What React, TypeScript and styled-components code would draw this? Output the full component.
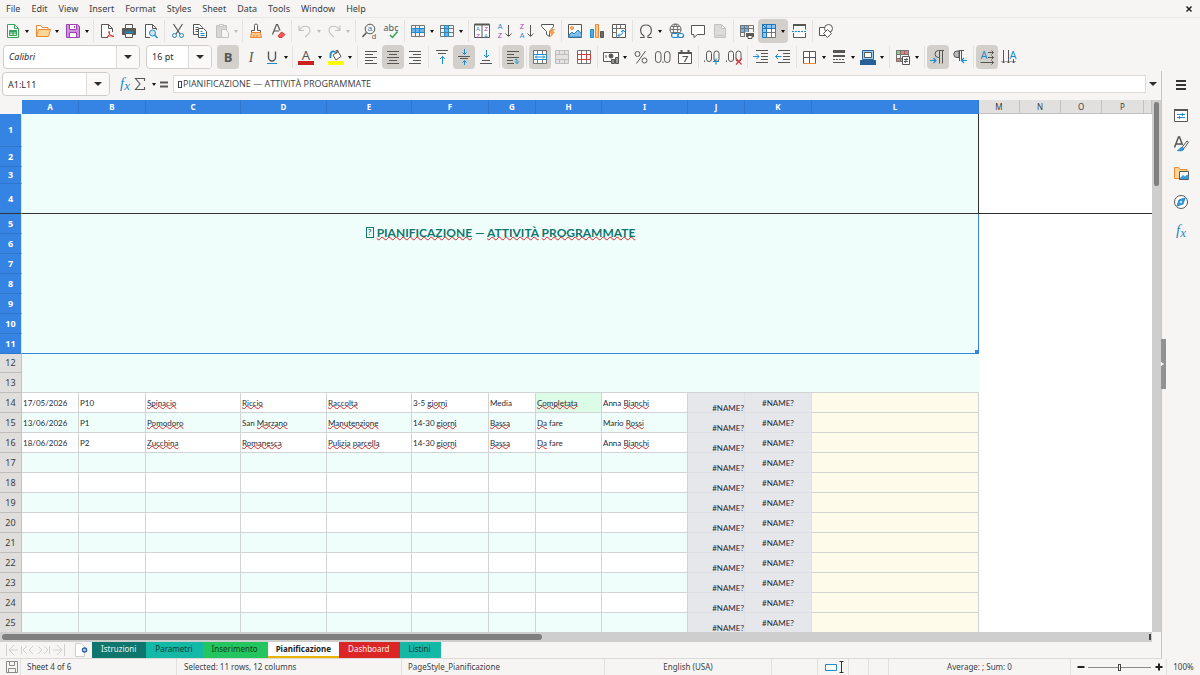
import React, { Fragment, ReactNode } from 'react';
import styled, { createGlobalStyle, css } from 'styled-components';

const ui = '"Noto Sans", "Open Sans", sans-serif';
const cellFont = 'Lato, "Open Sans", sans-serif';

const color = {
  chrome: '#f6f5f4',
  line: '#dcdad8',
  pressed: '#d3d0cc',
  text: '#3c4043',
  ink: '#565655',
  gridInk: '#747473',
  blue: '#1e8bcd',
  sky: '#83beec',
  orange: '#ed8733',
  red: '#d63a3a',
  purple: '#a142b4',
  green: '#35a35a',
  accent: '#3584e4',
  mint: '#effefb',
  grid: '#d0d4d4',
};

const GlobalStyle = createGlobalStyle`
  *, *::before, *::after { box-sizing: border-box; }
  body { margin: 0; background: ${color.chrome}; }
  button, input, select { font: inherit; color: inherit; margin: 0; padding: 0; }
`;

/* ---------- frame ---------- */

const Window = styled.div`
  display: flex;
  flex-direction: column;
  height: 100vh;
  overflow: hidden;
  background: ${color.chrome};
  color: ${color.text};
  font: 8px/12px ${ui};
`;

const MenuBar = styled.nav`
  display: flex;
  align-items: center;
  height: 18px;
  padding: 0 3px 0 2px;
  border-bottom: 1px solid #ebe9e7;
  font-size: 9px;
`;

const MenuItem = styled.button`
  border: 0;
  background: none;
  padding: 0 7px 0 4px;
`;

const CloseButton = styled.button`
  margin-left: auto;
  border: 0;
  background: none;
  display: flex;
`;

const Toolbar = styled.div<{ $height: number }>`
  display: flex;
  align-items: flex-start;
  height: ${(p) => p.$height}px;
  padding: 1px 0 0 2px;
  flex: none;
`;

const ToolButton = styled.button<{ $on?: boolean; $split?: number; $dim?: boolean }>`
  display: flex;
  align-items: center;
  width: ${(p) => 22 + (p.$split ?? 0)}px;
  height: 24px;
  flex: none;
  padding: 0 0 0 3px;
  border: 0;
  border-radius: 4px;
  background: ${(p) => (p.$on ? color.pressed : 'none')};
  color: ${(p) => (p.$dim ? '#c4c2c0' : color.ink)};
`;

const Caret = styled.span<{ $dim?: boolean }>`
  width: 0;
  margin-left: 4px;
  border: solid transparent;
  border-width: 3px 2px 0;
  border-top-color: ${(p) => (p.$dim ? '#bdbbb9' : '#111')};
`;

const Separator = styled.span`
  width: 1px;
  height: 22px;
  margin: 1px 2px;
  background: #e4e2e0;
  flex: none;
`;

const Svg = styled.svg`
  display: block;
  width: 16px;
  height: 16px;
  flex: none;
  fill: none;
  stroke: currentColor;
  overflow: visible;
`;

const Glyph = styled.text<{ $size: number; $face?: string }>`
  font: ${(p) => p.$size}px ${(p) => p.$face ?? ui};
  text-anchor: middle;
  stroke: none;
  fill: currentColor;
`;

const Combo = styled.label<{ $width: number; $italic?: boolean }>`
  display: flex;
  align-items: center;
  width: ${(p) => p.$width}px;
  height: 24px;
  flex: none;
  border: 1px solid #cfccc9;
  border-radius: 4px;
  background: #fff;
  overflow: hidden;
  font-size: 9px;
  color: #2c2c2c;
  font-style: ${(p) => (p.$italic ? 'italic' : 'normal')};

  select, input {
    flex: 1;
    min-width: 0;
    height: 100%;
    padding-left: 5px;
    border: 0;
    outline: 0;
    background: none;
    appearance: none;
  }
`;

const ComboArrow = styled.span`
  display: flex;
  align-items: center;
  justify-content: center;
  width: 23px;
  height: 100%;
  border-left: 1px solid ${color.line};
  background: #faf9f8;
`;

const Triangle = styled.span`
  border: solid transparent;
  border-width: 4px 4px 0;
  border-top-color: #2c2c2c;
`;

const FontCombos = styled.div`
  display: flex;
  gap: 6px;
  padding: 0 5px 0 1px;
`;

const Workspace = styled.div`
  display: flex;
  flex: 1;
  min-height: 0;
`;

const Main = styled.main`
  display: flex;
  flex-direction: column;
  flex: 1;
  min-width: 0;
`;

/* ---------- formula bar ---------- */

const FormulaBar = styled.div`
  display: flex;
  align-items: center;
  height: 29px;
  flex: none;
  padding: 0 4px 3px 2px;
`;

const FormulaTools = styled.div`
  display: flex;
  align-items: center;
  padding: 0 1px 0 7px;
`;

const PlainButton = styled.button<{ $width: number }>`
  display: flex;
  align-items: center;
  justify-content: center;
  width: ${(p) => p.$width}px;
  border: 0;
  background: none;
  color: ${color.ink};
`;

const FormulaField = styled.label`
  display: flex;
  align-items: center;
  flex: 1;
  height: 18px;
  margin-right: 2px;
  padding-left: 4px;
  border: 1px solid ${color.line};
  background: #fff;
  font: 9px/12px "Open Sans", sans-serif;

  input {
    flex: 1;
    min-width: 0;
    padding-left: 1px;
    border: 0;
    outline: 0;
    background: none;
  }
`;

const MissingGlyph = styled.span<{ $large?: boolean }>`
  display: inline-block;
  border: 1px solid currentColor;
  width: 4px;
  height: 7px;
  ${(p) =>
    p.$large &&
    css`
      width: 8px;
      height: 11px;
      margin: 2px 3px 0 0;
      font: bold 8px/9px ${cellFont};
      text-align: center;
      vertical-align: top;
    `}
`;

/* ---------- sheet ---------- */

const SheetArea = styled.div`
  display: flex;
  flex: 1;
  min-height: 0;
`;

const GridView = styled.div`
  flex: 1;
  min-width: 0;
  overflow: hidden;
  background: #fff;
`;

const Table = styled.table`
  width: 100%;
  table-layout: fixed;
  border-collapse: separate;
  border-spacing: 0;
  font: 8px/10px ${cellFont};
  color: #1f2937;

  td, th { padding: 0; overflow: hidden; white-space: nowrap; }
`;

const Col = styled.col<{ $width?: number }>`
  width: ${(p) => (p.$width ? `${p.$width}px` : 'auto')};
`;

const HeadCell = styled.th<{ $selected?: boolean }>`
  height: 14px;
  font: 8px/12px ${ui};
  font-weight: ${(p) => (p.$selected ? 700 : 400)};
  color: ${(p) => (p.$selected ? '#fff' : '#3c3c3c')};
  background: ${(p) => (p.$selected ? color.accent : '#e1e0df')};
  border-right: 1px solid ${(p) => (p.$selected ? '#2f76cc' : '#c4c2c0')};
  border-bottom: 1px solid ${(p) => (p.$selected ? color.accent : '#c4c2c0')};
`;

const Corner = styled.td`
  background: ${color.chrome};
`;

const RowHead = styled.th<{ $selected?: boolean; $height: number; $frozenEdge?: boolean }>`
  height: ${(p) => p.$height}px;
  font: 9px/12px ${ui};
  font-weight: ${(p) => (p.$selected ? 700 : 400)};
  color: ${(p) => (p.$selected ? '#fff' : '#3c3c3c')};
  background: ${(p) => (p.$selected ? color.accent : '#dfdedd')};
  border-right: 1px solid ${(p) => (p.$selected ? '#d5e4f8' : '#c4c2c0')};
  border-bottom: 1px solid
    ${(p) => (p.$frozenEdge ? '#333' : p.$selected ? '#2f76cc' : '#bfbdbb')};
`;

const TitleCell = styled.td`
  position: relative;
  background: ${color.mint};
  color: #0f766e;
  text-align: center;
  font: bold 12px/16px ${cellFont};

  && { padding-bottom: 2px; }
`;

const FrozenEdge = styled.span`
  position: absolute;
  inset: 0 0 auto 0;
  height: 100px;
  border: solid #333;
  border-width: 0 1px 1px 0;
`;

const SelectionEdge = styled.span`
  position: absolute;
  inset: 100px 0 0 0;
  border: solid ${color.accent};
  border-width: 0 1px 1px 0;

  &::after {
    content: '';
    position: absolute;
    right: -1px;
    bottom: -1px;
    width: 4px;
    height: 4px;
    background: ${color.accent};
  }
`;

const FreeCell = styled.td<{ $frozenEdge?: boolean }>`
  border-bottom: ${(p) => (p.$frozenEdge ? '1px solid #333' : '0')};
`;

const BlankCell = styled.td<{ $last?: boolean }>`
  background: ${color.mint};
  border-bottom: ${(p) => (p.$last ? `1px solid ${color.grid}` : '0')};
`;

type CellKind = 'plain' | 'error' | 'errorCentered' | 'note';

const DataCell = styled.td<{ $kind: CellKind; $striped: boolean; $done?: boolean }>`
  border: solid ${color.grid};
  border-width: 0 1px 1px 0;
  background: ${(p) => (p.$done ? '#dcfce7' : p.$striped ? color.mint : '#fff')};

  && { padding: 0 1px; }

  ${(p) =>
    p.$kind === 'note' &&
    css`
      background: #fffbeb;
    `}
  ${(p) =>
    p.$kind.startsWith('error') &&
    css`
      background: #e5e7eb;
      border-color: #dddfe4;
      text-align: center;
    `}
  ${(p) =>
    p.$kind === 'error' &&
    css`
      text-align: right;
      vertical-align: bottom;
      line-height: 8px;

      && { padding: 0; }
    `}
`;

const Misspelled = styled.span`
  text-decoration: underline wavy #e02424 1px;
  text-decoration-skip-ink: none;
  text-underline-offset: -1px;
`;

const VerticalTrack = styled.div`
  width: 9px;
  padding: 2px;
  background: #cecece;
`;

const VerticalThumb = styled.div`
  height: 16%;
  border-radius: 3px;
  background: #7f7f7f;
`;

const HorizontalTrack = styled.div`
  display: flex;
  justify-content: space-between;
  height: 10px;
  flex: none;
  margin-right: 9px;
  padding: 2px 1px 2px 2px;
  background: #cecece;
`;

const HorizontalThumb = styled.div`
  width: 47%;
  border-radius: 3px;
  background: #7f7f7f;
`;

const SplitHandle = styled.div`
  width: 2px;
  background: #444;
`;

const Tabs = styled.div`
  display: flex;
  height: 17px;
  flex: none;
  border-bottom: 1px solid ${color.line};
`;

const TabNav = styled.div`
  display: flex;
  align-items: center;
  width: 74px;
  padding-left: 5px;
`;

const NavButton = styled.button`
  display: flex;
  width: 15px;
  border: 0;
  background: none;
  color: #d2d0ce;
`;

const AddSheet = styled.button`
  display: flex;
  align-items: center;
  width: 18px;
  border: 0;
  background: none;
`;

const Tab = styled.button<{ $bg: string; $fg: string; $active?: boolean }>`
  border: 0;
  padding: ${(p) => (p.$active ? '0 8px 2px' : '0 10px 2px 9px')};
  background: ${(p) => p.$bg};
  color: ${(p) => p.$fg};
  font-weight: ${(p) => (p.$active ? 700 : 400)};
  box-shadow: ${(p) => (p.$active ? 'inset 0 -2px #eab308' : 'none')};
`;

/* ---------- sidebar ---------- */

const Sidebar = styled.aside`
  position: relative;
  display: flex;
  flex-direction: column;
  align-items: center;
  gap: 5px;
  width: 39px;
  padding: 3px 1px 0 1px;
  border-left: 1px solid #c8c6c4;
`;

const SideButton = styled.button`
  display: flex;
  align-items: center;
  height: 24px;
  border: 0;
  background: none;
  color: ${color.ink};
`;

const SideHandle = styled.button`
  position: absolute;
  left: -1px;
  top: 268px;
  display: flex;
  align-items: center;
  width: 5px;
  height: 50px;
  border: 0;
  background: #929292;

  &::after {
    content: '';
    border: solid transparent;
    border-width: 2px 0 2px 3px;
    border-left-color: #fff;
  }
`;

/* ---------- status bar ---------- */

const StatusBar = styled.footer`
  display: grid;
  grid-template-columns: 21px 156fr 225fr 203fr 167fr 46px 31px 20px 20px 182fr 96px 33px;
  grid-template-rows: 16px;
  height: 16px;
  flex: none;
`;

const StatusCell = styled.div<{ $center?: boolean; $pad?: number }>`
  display: flex;
  align-items: center;
  justify-content: ${(p) => (p.$center ? 'center' : 'flex-start')};
  padding-left: ${(p) => p.$pad ?? 0}px;
  border-right: 1px solid #e2e0de;
  white-space: nowrap;

  &:last-child { border: 0; }
`;

const ZoomSlider = styled.input`
  flex: 1;
  min-width: 0;
  height: 12px;
  appearance: none;
  background: linear-gradient(#8a8a8a, #8a8a8a) center / 100% 1px no-repeat;

  &::-webkit-slider-thumb {
    appearance: none;
    width: 3px;
    height: 7px;
    border: 1px solid #444;
    background: #fff;
  }
`;

const ZoomButton = styled.button`
  display: flex;
  width: 15px;
  justify-content: center;
  border: 0;
  background: none;
  color: #222;
`;

/* ---------- icons ---------- */

const Sheet = () => (
  <path stroke={color.gridInk} d="M1.5 2.5h13v11h-13zM1.5 5.5h13M1.5 9.5h13M5.5 2.5v11M9.500 2.5v11" />
);

const Para = () => (
  <path strokeWidth="1" fill="none" d="M14 1.500H8.500a3.500 3.500 0 0 0 0 7H9M9.500 1.500v13M12.500 1.500v13" />
);

const sans = '"Liberation Sans", sans-serif';

const icons: Record<string, ReactNode> = {
  new: (
    <g stroke={color.green}>
      <path fill="#fff" d="M2.500 1.500h7l4 4v9h-11z" />
      <path d="M9.500 1.500v4h4" />
      <path fill="#cdeed6" d="M4.500 7.500h7v5h-7zM4.500 10h7M8 7.500v5" />
      <path strokeWidth="2" d="M4.500 8h7" />
    </g>
  ),
  open: (
    <g stroke={color.orange}>
      <path fill="#fff" d="M1.500 13.500v-11h4l1.500 2h6v2" />
      <path fill="#fbd795" d="M1.500 13.500l2-7h12l-2 7z" />
    </g>
  ),
  save: (
    <g stroke={color.purple}>
      <path fill="#cf8fdc" d="M1.500 1.500h11l2 2v11h-13z" />
      <path fill="#fff" d="M4.500 1.500h7v5h-7zM4.500 9.500h7v5h-7z" />
      <path d="M9.500 3v2" />
    </g>
  ),
  pdf: (
    <>
      <path fill="#fff" d="M9 14.500H2.500v-13h7l4 4V9" />
      <path d="M9.500 1.500v4h4" />
      <path stroke={color.red} d="M7.500 14.500c2.500-1.500 3.500-4 3-6-.8-.8-1.500.5 0 2.500s3 3 4.500 2.500c-1-1.500-5-1-7.500 1z" />
    </>
  ),
  print: (
    <>
      <path fill="#fff" d="M4.500 5V1.500h7V5" />
      <path fill="#5c5c5b" d="M1.500 5.500h13v6h-13z" />
      <path stroke={color.blue} strokeWidth="2" d="M4 9.500h8" />
      <path fill="#fff" d="M4.500 10.500h7v4h-7z" />
    </>
  ),
  preview: (
    <>
      <path fill="#fff" d="M7 14.500H2.500v-13h7l4 4V7" />
      <path d="M9.500 1.500v4h4" />
      <circle cx="9.500" cy="10" r="3" stroke={color.blue} fill="#cde6f8" />
      <path stroke={color.blue} strokeWidth="1.500" d="M11.500 12l3 3" />
    </>
  ),
  cut: (
    <>
      <path strokeWidth="1.200" d="M3.500 1l6.500 10M12.500 1L6 11" />
      <circle cx="4.500" cy="12.500" r="2" stroke={color.blue} />
      <circle cx="11.500" cy="12.500" r="2" stroke={color.blue} />
    </>
  ),
  copy: (
    <>
      <path fill="#fff" d="M1.500 1.500h6l3 3v7h-9zM3.500 4.500h3M3.500 6.500h4M3.500 8.500h3" />
      <path fill="#fff" d="M6.500 5.500h5l3 3v6h-8z" />
      <path stroke={color.blue} d="M8.500 8.500h2M8.500 10.500h4M8.500 12.500h4" />
    </>
  ),
  paste: (
    <>
      <path fill="#d8d6d4" d="M2.500 2.500h10v12h-10z" />
      <path fill="#f6f5f4" d="M5.500 1.500h4v2h-4zM7.500 6.500h4l3 3v5h-7z" />
    </>
  ),
  clone: (
    <>
      <path fill="#fff" d="M6.500 7.500v-5a1.500 1.500 0 0 1 3 0v5h3v2h-9v-2z" />
      <path stroke={color.orange} fill="#f9c98d" d="M3.500 9.500h9l1 5h-11zM6 12v2.500M9 12v2.500" />
    </>
  ),
  clear: (
    <>
      <path strokeWidth="1.200" d="M2.500 11.500l4-10h1l2.500 6M4 8h5" />
      <path stroke={color.red} fill="#ef5b5b" d="M8 13l3.500-4 3.500 2.500-3 3h-3z" />
    </>
  ),
  undo: <path strokeWidth="1.100" d="M2 2.500v5h5M2.500 7C6 1 13 3 13 7.500c0 3-2.500 4.500-5 6.500" />,
  redo: <path strokeWidth="1.100" d="M14 2.500v5H9M13.500 7C10 1 3 3 3 7.500c0 3 2.500 4.500 5 6.500" />,
  find: (
    <>
      <circle cx="9" cy="6" r="4.800" />
      <path strokeWidth="1.500" d="M5.500 9.500L1.500 14" />
      <g color={color.blue}><Glyph $size={8} $face={sans} x="9" y="8">a</Glyph></g>
      <path stroke={color.chrome} strokeWidth="3" d="M11 12.500h4" />
      <Glyph $size={8} $face={sans} x="13" y="15.500">d</Glyph>
    </>
  ),
  spell: (
    <>
      <Glyph $size={9} x="8" y="7.500">abc</Glyph>
      <path stroke={color.green} strokeWidth="1.500" d="M7 12l2.500 2.500 5-6" />
    </>
  ),
  row: (
    <>
      <rect x="1" y="5" width="14" height="5" fill="#6ab4ea" stroke="none" />
      <Sheet />
      <path stroke={color.blue} d="M1 5.500h14M1 9.500h14" />
    </>
  ),
  column: (
    <>
      <rect x="5" y="2" width="5" height="12" fill="#6ab4ea" stroke="none" />
      <Sheet />
      <path stroke={color.blue} d="M5.500 2v12M9.500 2v12" />
    </>
  ),
  sort: (
    <>
      <path fill="#fff" d="M.5 1.500h15v13H.5zM8 1.500v13" />
      <path strokeWidth="2" d="M.5 1.500h15" />
      <g color={color.blue}>
        <Glyph $size={6} $face={sans} x="4" y="7.500">A</Glyph>
        <Glyph $size={6} $face={sans} x="12" y="14.500">A</Glyph>
      </g>
      <g color={color.purple}>
        <Glyph $size={6} $face={sans} x="4" y="14.500">Z</Glyph>
        <Glyph $size={6} $face={sans} x="12" y="7.500">Z</Glyph>
      </g>
    </>
  ),
  az: (
    <>
      <g color={color.blue}><Glyph $size={7} $face={sans} x="4" y="6">A</Glyph></g>
      <g color={color.purple}><Glyph $size={7} $face={sans} x="4" y="15">Z</Glyph></g>
      <path d="M12.500 2v11M9.500 10.500l3 3 3-3" />
    </>
  ),
  za: (
    <>
      <g color={color.purple}><Glyph $size={7} $face={sans} x="4" y="6">Z</Glyph></g>
      <g color={color.blue}><Glyph $size={7} $face={sans} x="4" y="15">A</Glyph></g>
      <path d="M12.500 2v11M9.500 10.500l3 3 3-3" />
    </>
  ),
  filter: (
    <>
      <path fill="#fff" d="M1.500 1.500h12v2l-4 5v5l-3-2v-3l-5-5z" />
      <path stroke="none" fill="#f0a04c" d="M11 6h4l-2 3h2l-5 6 1-4.500H9z" />
    </>
  ),
  image: (
    <>
      <path fill="#fff" d="M1.500 1.500h13v13h-13z" />
      <circle cx="5" cy="5" r="1.500" stroke={color.orange} fill="#f9c98d" />
      <path fill={color.sky} stroke={color.blue} d="M2 12l3-3 2 2 4-4 3.500 4v3H2z" />
    </>
  ),
  chart: (
    <>
      <path fill="#5aa9e0" stroke={color.blue} d="M1.500 6.500h3v8h-3z" />
      <path fill="#f9c98d" stroke={color.orange} d="M6.500 1.500h3v13h-3z" />
      <path fill="#6b6b6a" d="M11.500 8.500h3v6h-3z" />
    </>
  ),
  pivot: (
    <>
      <path fill="#fff" d="M1.500 1.500h13v13h-13z" />
      <path stroke={color.gridInk} d="M1.500 5.500h13M5.500 1.500v13M9.500 1.500v4M1.500 9.500h4" />
      <path stroke={color.blue} d="M7 12.500c3.500 0 5-2 5-5M10 9l2-2 2 2M9 10.500l-2 2 2 2" />
    </>
  ),
  omega: <path strokeWidth="1.200" d="M2 14.500h4v-1.500C1 10 1.500 2 8 2s7 8 2 11v1.500h4" />,
  link: (
    <>
      <circle cx="7.500" cy="6.500" r="5.500" />
      <path d="M2.500 6.500h10M7.500 1c-3 3-3 8 0 11M7.500 1c3 3 3 8 0 11M3.500 3.500h8M3.500 9.500h8" strokeWidth=".8" />
      <path stroke={color.blue} strokeWidth="1.200" fill={color.chrome} d="M5.500 10.500h2.500a2 2 0 0 1 0 4H5.500a2 2 0 0 1 0-4zM12 10.500h1.500a2 2 0 0 1 0 4H12a2 2 0 0 1 0-4z" />
    </>
  ),
  comment: <path fill="#fff" d="M1.500 2.500h13v9h-7l-3.500 3v-3H1.500z" />,
  page: <path fill="#dddbd9" d="M2.500 1.500h7l4 4v9h-11zM9.500 1.500v4h4M4.500 12.500h7" />,
  printArea: (
    <>
      <rect x="1" y="2" width="9" height="8" fill="#6ab4ea" stroke="none" />
      <Sheet />
      <path fill="#5c5c5b" stroke={color.chrome} d="M6.500 9.500h9v5h-9z" />
      <path fill="#fff" d="M9 12.500h4v3H9z" />
    </>
  ),
  freeze: (
    <>
      <path stroke="none" fill="#8cc6f2" d="M1 1h14v4H6v10H1z" />
      <path stroke="none" fill="#fff" d="M6 5h9v9H6z" />
      <path stroke={color.gridInk} d="M6 14.500h8.500V5M6 9.500h8.500M10.500 5v9.500" />
      <path stroke="#2277b8" d="M1.500 1.500h13v4h-13zM5.500 1.500v13h-4v-13M10.500 1.500v4M1.500 9.500h4M1.500 1.500l4 4" />
    </>
  ),
  split: (
    <>
      <path fill="#fff" d="M2.500 6.500v-5h12v5M2.500 10v4.500h12V10" />
      <path strokeWidth="2" d="M2 2h13" />
      <path stroke={color.blue} strokeDasharray="2 1" d="M1 8.500h15" />
    </>
  ),
  shapes: (
    <>
      <path fill="#fff" d="M1.500 4.500h8v8h-8z" />
      <circle cx="10.500" cy="5.500" r="4" fill="#fff" />
      <path fill="#fff" d="M9.500 6.500l4 4-4 4-4-4z" />
    </>
  ),
  bold: <text x="8" y="12.500" fontFamily="Open Sans, sans-serif" fontSize="13" fontWeight="700" textAnchor="middle" fill="currentColor" stroke="none">B</text>,
  italic: <text x="9" y="12.500" fontFamily="Liberation Serif, serif" fontSize="14" fontStyle="italic" textAnchor="middle" fill="currentColor" stroke="none">I</text>,
  underline: (
    <>
      <path strokeWidth="1.400" d="M4.500 2.500v6a3.500 3.500 0 0 0 7 0v-6" />
      <path stroke={color.blue} d="M3 14.500h10" />
    </>
  ),
  fontColor: (
    <>
      <Glyph $size={13} x="8" y="10.500">A</Glyph>
      <rect x="0" y="12" width="16" height="4" fill="#c9211e" stroke="none" />
    </>
  ),
  highlight: (
    <>
      <path fill="#fff" d="M5 6l5-3.500 3 5-5 3.500zM8 5V1.500h2V4" />
      <path stroke={color.blue} strokeWidth="1.800" d="M7 3C4 1.500 2 3 2.500 9" />
      <rect x="0" y="12" width="16" height="4" fill="#ffff00" stroke="none" />
    </>
  ),
  left: <path d="M2 2.500h12M2 5.500h8M2 8.500h12M2 11.500h8M2 14.500h12" />,
  center: <path d="M2 2.500h12M4 5.500h8M2 8.500h12M4 11.500h8M2 14.500h12" />,
  right: <path d="M2 2.500h12M6 5.500h8M2 8.500h12M6 11.500h8M2 14.500h12" />,
  top: (
    <>
      <path d="M2 1.500h12M4 4.500h8" />
      <path stroke={color.blue} d="M8.500 15V7.500M6 10l2.500-2.500L11 10" />
    </>
  ),
  middle: (
    <>
      <path d="M2 7.500h12M4 9.500h8" />
      <path stroke={color.blue} d="M8.500 0v5M6.500 3.500l2 2 2-2M8.500 16v-4M6.500 13.500l2-2 2 2" />
    </>
  ),
  bottom: (
    <>
      <path d="M4 11.500h8M2 14.500h12" />
      <path stroke={color.blue} d="M8.500 1v7M6 6l2.500 2.500L11 6" />
    </>
  ),
  wrap: (
    <>
      <path d="M2 2.500h12M2 5.500h7M2 8.500h12M2 11.500h6M2 14.500h7" />
      <path stroke={color.blue} d="M10 10.500h2v4M10 12.500l2 2 2-2" />
    </>
  ),
  merge: (
    <>
      <path fill="#fff" stroke={color.gridInk} d="M1.500 1.500h13v13h-13zM5.500 1.500v4M10.500 1.500v4M5.500 10.500v4M10.500 10.500v4" />
      <path fill="#fff" stroke={color.blue} d="M1.500 5.500h13v5h-13zM3 8h10M5 6.500L3.500 8 5 9.500M11 6.500L12.500 8 11 9.500" />
    </>
  ),
  mergeOff: (
    <path stroke="#bfbdbb" fill="#e4e2e0" d="M1.500 1.500h13v13h-13zM5.500 1.500v4M10.500 1.500v4M5.500 10.500v4M10.500 10.500v4M1.500 5.500h13v5h-13z" />
  ),
  unmerge: (
    <>
      <path fill="#fff" stroke={color.gridInk} d="M1.500 1.500h13v13h-13zM5.500 1.500v13M10.500 1.500v13" />
      <path stroke={color.red} d="M1.500 5.500h13v5h-13zM5.500 5.500v5M10.500 5.500v5" />
    </>
  ),
  currency: (
    <>
      <path fill="#fff" d="M.5 3.500h15v9H.5z" />
      <circle cx="8" cy="7" r="2" fill="currentColor" />
      <path d="M3 6v3" />
      <path fill="#999" d="M8.500 10.500h3v4h-3zM12.500 8.500h3v6h-3z" />
    </>
  ),
  percent: (
    <g>
      <circle cx="4.500" cy="5" r="2.500" />
      <circle cx="11.500" cy="11.500" r="2.500" />
      <path d="M12.500 2l-9 12.500" />
    </g>
  ),
  number: (
    <g>
      <rect x=".5" y="2.500" width="5.500" height="11" rx="2.700" />
      <rect x="9.500" y="2.500" width="5.500" height="11" rx="2.700" />
      <path d="M8 12.500v1.500" />
    </g>
  ),
  date: (
    <>
      <path fill="#fff" d="M1.500 3.500h13v11h-13z" />
      <path strokeWidth="2" d="M1 4h14M4.500 1v3M11.500 1v3" />
      <path strokeWidth="1.200" d="M5.500 7.500h5l-3 5.500" />
    </>
  ),
  addDecimal: (
    <>
      <rect x="2.500" y="2" width="5" height="10.500" rx="2.500" />
      <rect x="10" y="2" width="5" height="10.500" rx="2.500" />
      <path d="M.5 11.500v1.500" />
      <path stroke={color.blue} strokeWidth="1.200" d="M9 12.500h6M12 9.500v6" />
    </>
  ),
  delDecimal: (
    <>
      <rect x="2.500" y="2" width="5" height="10.500" rx="2.500" />
      <rect x="10" y="2" width="5" height="10.500" rx="2.500" />
      <path d="M.5 11.500v1.500" />
      <path stroke={color.red} strokeWidth="1.200" d="M10 9.500l5.500 6M15.500 9.500l-5.500 6" />
    </>
  ),
  indent: (
    <>
      <path d="M3 1.500h12M8 4.500h7M8 7.500h7M8 10.500h7M3 13.500h12" />
      <path stroke={color.blue} d="M0 7.500h6M3.500 5L6 7.500 3.500 10" />
    </>
  ),
  outdent: (
    <>
      <path d="M3 1.500h12M8 4.500h7M8 7.500h7M8 10.500h7M3 13.500h12" />
      <path stroke={color.blue} d="M.5 7.500h6M3 5L.5 7.500 3 10" />
    </>
  ),
  borders: (
    <>
      <path fill="#fff" d="M1.500 2.500h12v12h-12z" stroke="none" />
      <path d="M1.500 14.500v-12h12v12M7.500 2.500v12M1.500 8.500h12" />
      <path stroke={color.orange} d="M1 14.500h13" />
    </>
  ),
  lineStyle: (
    <>
      <path strokeWidth="3" d="M2 2.500h12" />
      <path strokeWidth="2" d="M2 7h12" />
      <path strokeDasharray="2 1" d="M2 10.500h12" />
      <path d="M2 13.500h12" />
    </>
  ),
  borderColor: (
    <>
      <path fill="#9ed0f5" stroke="#2a6099" d="M2.500 1.500h11v9h-11z" />
      <path fill="#fff" d="M4.500 3.500h7v5h-7z" />
      <rect x="0" y="11" width="16" height="5" fill="#2a6099" stroke="none" />
    </>
  ),
  conditional: (
    <>
      <path stroke="none" fill="#7fd18f" d="M1 1h4v5H1zM5 9h3v4H5z" />
      <path stroke="none" fill="#ef7a7a" d="M5 1h9v4H5zM1 9h4v4H1z" />
      <path stroke={color.gridInk} d="M1.500 1.500h12v11h-12zM1.500 5.500h12M1.500 9.500h6M5.500 1.500v11M9.500 1.500v4" />
      <path fill="#fff" d="M7.500 7.500h7v8h-7z" />
      <path d="M9 10.500h4M9 12.500h4M12 9l-2 5" />
    </>
  ),
  ltr: (
    <>
      <Para />
      <path stroke={color.blue} strokeWidth="1.200" d="M0 11.500h6M3.500 9L6 11.500 3.500 14" />
    </>
  ),
  rtl: (
    <>
      <path fill="#bbb9b7" d="M7 2H5a3 3 0 0 0 0 6.500h2z" />
      <path d="M7.500 2v10M9.500 2v10M7 1.500h5" />
      <path stroke={color.blue} strokeWidth="1.200" d="M15 11.500H9.500M12 9l-2.500 2.500L12 14" />
    </>
  ),
  textRight: (
    <>
      <g color={color.blue}><Glyph $size={11} x="5" y="9.500">A</Glyph></g>
      <path d="M9 3.500h5.500M12.500 1.500l2 2-2 2M9 8.500h5.500M12.500 6.500l2 2-2 2M1.500 13.500h13M12.500 11.500l2 2-2 2" />
    </>
  ),
  textDown: (
    <>
      <g color={color.blue}><Glyph $size={11} x="12" y="9.500">A</Glyph></g>
      <path d="M2.500 1v13M.5 12l2 2 2-2M7.500 1v13M5.500 12l2 2 2-2M12.500 10v4M10.500 12l2 2 2-2" />
    </>
  ),
  menu: <path stroke="#333" strokeWidth="2" d="M3 3h10M3 7h10M3 11h10" />,
  properties: (
    <>
      <path fill="#fff" d="M1.500 2.500h13v12h-13z" />
      <path strokeWidth="2" d="M1 3h14" />
      <path stroke={color.blue} d="M4 7.500h8M4 10.500h8M9.500 6v3M6.500 9v3" />
    </>
  ),
  styles: (
    <>
      <path strokeWidth="1.500" d="M1.500 11.500L5.500 1h1l3 8M3 8h6" />
      <path fill="#fff" d="M9 11.500l5-6.500 1.500 1L11 12.500z" />
      <path stroke={color.blue} fill="#3c9bdd" d="M4.500 14.500c2 0 2-3 4.500-3l2 1.500c-1 2-3.500 2-6.500 1.500z" />
    </>
  ),
  gallery: (
    <>
      <path stroke={color.orange} fill="#fbd795" d="M1.500 13.500v-11h4l1.500 2h7v9z" />
      <path fill="#fff" d="M6.500 6.500h9v8h-9z" />
      <path stroke="none" fill="#3c9bdd" d="M7 13l3-3 2 1.500 2-2 1.500 1.500v3H7z" />
    </>
  ),
  navigator: (
    <>
      <circle cx="8" cy="8" r="6.500" fill="#fff" />
      <path stroke={color.blue} fill="#3c9bdd" d="M12 4l-2 6-6 2 2-6z" />
      <circle cx="8" cy="8" r="1" fill="#fff" stroke="none" />
    </>
  ),
  fx: (
    <text x="8" y="12" fontFamily="Liberation Serif, serif" fontSize="15" fontStyle="italic" textAnchor="middle" fill={color.blue} stroke="none">
      f<tspan fontSize="13" dy="2">x</tspan>
    </text>
  ),
  sigma: <path strokeWidth="1.100" d="M12.500 5V2.500h-9L8 8l-4.500 5.500h9V11" />,
  equals: <path strokeWidth="2" d="M4 6.500h8M4 10.500h8" />,
  close: <path stroke="#222" strokeWidth="1.500" d="M5.500 5.500l5 5M10.500 5.500l-5 5" />,
  first: <path d="M1.500 2v12M9 3L4 8l5 5M4 8h9" />,
  previous: <path d="M7 4L3 8l4 4M13 4L9 8l4 4M1.500 4v8" />,
  next: <path d="M3 4l4 4-4 4M9 4l4 4-4 4M14.500 4v8" />,
  last: <path d="M14.500 2v12M7 3l5 5-5 5M12 8H3" />,
  addSheet: (
    <>
      <path stroke="#d0cecc" fill="#fff" d="M1.500 1.500h6l3 3v10h-9z" />
      <circle cx="10.500" cy="8" r="2" stroke="#2a5fb0" strokeWidth="1.500" />
    </>
  ),
  disk: <path stroke="#8c8a88" d="M2.500 2.500h11v11h-11zM5.500 2.500v4h5v-4M4.500 13.500v-4h7v4" />,
  insertMode: (
    <>
      <path stroke={color.blue} fill="#fff" d="M.5 5.500h11v6H.5z" />
      <path stroke="#333" d="M16.500 3v10M14.500 2.500h4M14.500 13.500h4" />
    </>
  ),
  minus: <path strokeWidth="2" d="M4.500 8h7" />,
  plus: <path strokeWidth="2" d="M4.500 8h7M8 4.500v7" />,
};

const Icon = ({ name }: { name: string }) => (
  <Svg viewBox="0 0 16 16" aria-hidden="true">
    {icons[name]}
  </Svg>
);

/* ---------- data ---------- */

type Tool = { icon: string; label: string; split?: number; on?: boolean; dim?: boolean };

const standardTools: Tool[][] = [
  [
    { icon: 'new', label: 'New', split: 8 },
    { icon: 'open', label: 'Open', split: 8 },
    { icon: 'save', label: 'Save', split: 7 },
  ],
  [
    { icon: 'pdf', label: 'Export as PDF' },
    { icon: 'print', label: 'Print' },
    { icon: 'preview', label: 'Print preview' },
  ],
  [
    { icon: 'cut', label: 'Cut' },
    { icon: 'copy', label: 'Copy' },
    { icon: 'paste', label: 'Paste', split: 7, dim: true },
  ],
  [
    { icon: 'clone', label: 'Clone formatting' },
    { icon: 'clear', label: 'Clear formatting' },
  ],
  [
    { icon: 'undo', label: 'Undo', split: 7, dim: true },
    { icon: 'redo', label: 'Redo', split: 8, dim: true },
  ],
  [
    { icon: 'find', label: 'Find and replace' },
    { icon: 'spell', label: 'Spelling' },
  ],
  [
    { icon: 'row', label: 'Row', split: 7 },
    { icon: 'column', label: 'Column', split: 8 },
  ],
  [
    { icon: 'sort', label: 'Sort' },
    { icon: 'az', label: 'Sort ascending' },
    { icon: 'za', label: 'Sort descending' },
    { icon: 'filter', label: 'AutoFilter' },
  ],
  [
    { icon: 'image', label: 'Insert image' },
    { icon: 'chart', label: 'Insert chart' },
    { icon: 'pivot', label: 'Insert pivot table' },
  ],
  [
    { icon: 'omega', label: 'Special character', split: 8 },
    { icon: 'link', label: 'Insert hyperlink' },
    { icon: 'comment', label: 'Insert comment' },
    { icon: 'page', label: 'Headers and footers', dim: true },
  ],
  [
    { icon: 'printArea', label: 'Define print area' },
    { icon: 'freeze', label: 'Freeze rows and columns', split: 8, on: true },
    { icon: 'split', label: 'Split window' },
  ],
  [{ icon: 'shapes', label: 'Show draw functions' }],
];

const formatTools: Tool[][] = [
  [
    { icon: 'bold', label: 'Bold', on: true },
    { icon: 'italic', label: 'Italic' },
    { icon: 'underline', label: 'Underline', split: 7 },
  ],
  [
    { icon: 'fontColor', label: 'Font color', split: 8 },
    { icon: 'highlight', label: 'Background color', split: 8 },
  ],
  [
    { icon: 'left', label: 'Align left' },
    { icon: 'center', label: 'Align center', on: true },
    { icon: 'right', label: 'Align right' },
  ],
  [
    { icon: 'top', label: 'Align top' },
    { icon: 'middle', label: 'Center vertically', on: true },
    { icon: 'bottom', label: 'Align bottom' },
  ],
  [{ icon: 'wrap', label: 'Wrap text', on: true }],
  [
    { icon: 'merge', label: 'Merge and center', on: true },
    { icon: 'mergeOff', label: 'Merge cells', dim: true },
    { icon: 'unmerge', label: 'Unmerge cells' },
  ],
  [
    { icon: 'currency', label: 'Format as currency', split: 8 },
    { icon: 'percent', label: 'Format as percent' },
    { icon: 'number', label: 'Format as number' },
    { icon: 'date', label: 'Format as date' },
  ],
  [
    { icon: 'addDecimal', label: 'Add decimal place' },
    { icon: 'delDecimal', label: 'Delete decimal place' },
  ],
  [
    { icon: 'indent', label: 'Increase indent' },
    { icon: 'outdent', label: 'Decrease indent' },
  ],
  [
    { icon: 'borders', label: 'Borders', split: 7 },
    { icon: 'lineStyle', label: 'Border style', split: 7 },
    { icon: 'borderColor', label: 'Border color', split: 8 },
  ],
  [{ icon: 'conditional', label: 'Conditional formatting', split: 8 }],
  [
    { icon: 'ltr', label: 'Left-to-right', on: true },
    { icon: 'rtl', label: 'Right-to-left' },
  ],
  [
    { icon: 'textRight', label: 'Text direction horizontal', on: true },
    { icon: 'textDown', label: 'Text direction vertical' },
  ],
];

const menus = ['File', 'Edit', 'View', 'Insert', 'Format', 'Styles', 'Sheet', 'Data', 'Tools', 'Window', 'Help'];

const columns = [
  ['A', 57], ['B', 67], ['C', 95], ['D', 86], ['E', 85], ['F', 77], ['G', 47], ['H', 66],
  ['I', 86], ['J', 57], ['K', 67], ['L', 167], ['M', 41], ['N', 41], ['O', 41], ['P', 42],
] as const;

const titleRowHeights = [33, 20, 17, 30, 20, 20, 20, 20, 20, 20, 20];
const blankRows = [
  { n: 12, height: 19 },
  { n: 13, height: 20 },
];
const dataRows = Array.from({ length: 12 }, (_, i) => 14 + i);

/* An asterisk in front of a word marks it as misspelled. */
const records: Record<number, string[]> = {
  14: ['17/05/2026', 'P10', '*Spinacio', '*Riccio', '*Raccolta', '3-5 *giorni', 'Media', '*Completata', 'Anna *Bianchi'],
  15: ['13/06/2026', 'P1', '*Pomodoro', 'San *Marzano', '*Manutenzione', '14-30 *giorni', '*Bassa', '*Da fare', 'Mario *Rossi'],
  16: ['18/06/2026', 'P2', '*Zucchina', '*Romanesca', '*Pulizia *parcella', '14-30 *giorni', '*Bassa', '*Da fare', 'Anna *Bianchi'],
};

const tabs = [
  { name: 'Istruzioni', bg: '#0f766e', fg: '#e6f4f2' },
  { name: 'Parametri', bg: '#14b8a6', fg: '#123a36' },
  { name: 'Inserimento', bg: '#22c55e', fg: '#103d20' },
  { name: 'Pianificazione', bg: '#ffffff', fg: '#222222', active: true },
  { name: 'Dashboard', bg: '#dc2626', fg: '#fdeaea' },
  { name: 'Listini', bg: '#14b8a6', fg: '#123a36' },
];

const panels = [
  ['menu', 'Sidebar settings'],
  ['properties', 'Properties'],
  ['styles', 'Styles'],
  ['gallery', 'Gallery'],
  ['navigator', 'Navigator'],
  ['fx', 'Functions'],
];

/* ---------- parts ---------- */

const ToolGroups = ({ groups }: { groups: Tool[][] }) => (
  <>
    {groups.map((group, i) => (
      <Fragment key={i}>
        {i > 0 && <Separator />}
        {group.map((t) => (
          <ToolButton key={t.icon} aria-label={t.label} $on={t.on} $split={t.split} $dim={t.dim}>
            <Icon name={t.icon} />
            {t.split && <Caret $dim={t.dim} />}
          </ToolButton>
        ))}
      </Fragment>
    ))}
  </>
);

const CellText = ({ value }: { value: string }) => (
  <>
    {value.split(' ').map((word, i) => (
      <Fragment key={i}>
        {i > 0 && ' '}
        {word.startsWith('*') ? <Misspelled>{word.slice(1)}</Misspelled> : word}
      </Fragment>
    ))}
  </>
);

const FreeCells = ({ frozenEdge }: { frozenEdge?: boolean }) => (
  <>
    {[0, 1, 2, 3, 4].map((n) => (
      <FreeCell key={n} $frozenEdge={frozenEdge} />
    ))}
  </>
);

const kindOf = (column: number): CellKind =>
  column === 9 ? 'error' : column === 10 ? 'errorCentered' : column === 11 ? 'note' : 'plain';

const SheetTable = () => (
  <Table>
    <colgroup>
      <Col $width={22} />
      {columns.map(([name, width]) => (
        <Col key={name} $width={width} />
      ))}
      <Col />
    </colgroup>
    <thead>
      <tr>
        <Corner />
        {columns.map(([name], i) => (
          <HeadCell key={name} scope="col" $selected={i < 12}>
            {name}
          </HeadCell>
        ))}
        <HeadCell />
      </tr>
    </thead>
    <tbody>
      {titleRowHeights.map((height, i) => (
        <tr key={i}>
          <RowHead scope="row" $selected $height={height} $frozenEdge={i === 3}>
            {i + 1}
          </RowHead>
          {i === 0 && (
            <TitleCell colSpan={12} rowSpan={11}>
              <MissingGlyph $large>?</MissingGlyph>
              <CellText value="*PIANIFICAZIONE — *ATTIVITÀ *PROGRAMMATE" />
              <FrozenEdge />
              <SelectionEdge />
            </TitleCell>
          )}
          <FreeCells frozenEdge={i === 3} />
        </tr>
      ))}
      {blankRows.map(({ n, height }) => (
        <tr key={n}>
          <RowHead scope="row" $height={height}>
            {n}
          </RowHead>
          <BlankCell colSpan={12} $last={n === 13} />
          <FreeCells />
        </tr>
      ))}
      {dataRows.map((n) => (
        <tr key={n}>
          <RowHead scope="row" $height={20}>
            {n}
          </RowHead>
          {columns.slice(0, 12).map(([name], c) => {
            const kind = kindOf(c);
            const value = kind.startsWith('error') ? '#NAME?' : records[n]?.[c] ?? '';
            return (
              <DataCell key={name} $kind={kind} $striped={n % 2 === 1} $done={value === '*Completata'}>
                <CellText value={value} />
              </DataCell>
            );
          })}
          <FreeCells />
        </tr>
      ))}
    </tbody>
  </Table>
);

export default function App() {
  return (
    <Window>
      <GlobalStyle />
      <MenuBar>
        {menus.map((m) => (
          <MenuItem key={m}>{m}</MenuItem>
        ))}
        <CloseButton aria-label="Close document">
          <Icon name="close" />
        </CloseButton>
      </MenuBar>
      <Toolbar $height={26}>
        <ToolGroups groups={standardTools} />
      </Toolbar>
      <Toolbar $height={27}>
        <FontCombos>
          <Combo $width={137} $italic>
            <select aria-label="Font name" defaultValue="Calibri">
              <option>Calibri</option>
            </select>
            <ComboArrow>
              <Triangle />
            </ComboArrow>
          </Combo>
          <Combo $width={66}>
            <select aria-label="Font size" defaultValue="16 pt">
              <option>16 pt</option>
            </select>
            <ComboArrow>
              <Triangle />
            </ComboArrow>
          </Combo>
        </FontCombos>
        <ToolGroups groups={formatTools} />
      </Toolbar>
      <Workspace>
        <Main>
          <FormulaBar>
            <Combo $width={108}>
              <input aria-label="Name box" defaultValue="A1:L11" />
              <ComboArrow>
                <Triangle />
              </ComboArrow>
            </Combo>
            <FormulaTools>
              <PlainButton $width={16} aria-label="Function wizard">
                <Icon name="fx" />
              </PlainButton>
              <PlainButton $width={22} aria-label="Select function">
                <Icon name="sigma" />
                <Caret />
              </PlainButton>
              <PlainButton $width={17} aria-label="Formula">
                <Icon name="equals" />
              </PlainButton>
            </FormulaTools>
            <FormulaField>
              <MissingGlyph />
              <input aria-label="Input line" defaultValue="PIANIFICAZIONE — ATTIVITÀ PROGRAMMATE" />
            </FormulaField>
            <PlainButton $width={9} aria-label="Expand formula bar">
              <Triangle />
            </PlainButton>
          </FormulaBar>
          <SheetArea>
            <GridView>
              <SheetTable />
            </GridView>
            <VerticalTrack>
              <VerticalThumb />
            </VerticalTrack>
          </SheetArea>
          <HorizontalTrack>
            <HorizontalThumb />
            <SplitHandle />
          </HorizontalTrack>
          <Tabs>
            <TabNav>
              {['first', 'previous', 'next', 'last'].map((n) => (
                <NavButton key={n} aria-label={`${n} sheet`}>
                  <Icon name={n} />
                </NavButton>
              ))}
            </TabNav>
            <AddSheet aria-label="Add sheet">
              <Icon name="addSheet" />
            </AddSheet>
            {tabs.map((t) => (
              <Tab key={t.name} $bg={t.bg} $fg={t.fg} $active={t.active}>
                {t.name}
              </Tab>
            ))}
          </Tabs>
        </Main>
        <Sidebar>
          {panels.map(([icon, label]) => (
            <SideButton key={icon} aria-label={label}>
              <Icon name={icon} />
            </SideButton>
          ))}
          <SideHandle aria-label="Hide sidebar" />
        </Sidebar>
      </Workspace>
      <StatusBar>
        <StatusCell $pad={4}>
          <Icon name="disk" />
        </StatusCell>
        <StatusCell $pad={6}>Sheet 4 of 6</StatusCell>
        <StatusCell $pad={7}>Selected: 11 rows, 12 columns</StatusCell>
        <StatusCell $pad={6}>PageStyle_Pianificazione</StatusCell>
        <StatusCell $center>English (USA)</StatusCell>
        <StatusCell />
        <StatusCell $center>
          <Icon name="insertMode" />
        </StatusCell>
        <StatusCell />
        <StatusCell />
        <StatusCell $center>Average: ; Sum: 0</StatusCell>
        <StatusCell $pad={2}>
          <ZoomButton aria-label="Zoom out">
            <Icon name="minus" />
          </ZoomButton>
          <ZoomSlider type="range" aria-label="Zoom" defaultValue={50} />
          <ZoomButton aria-label="Zoom in">
            <Icon name="plus" />
          </ZoomButton>
        </StatusCell>
        <StatusCell $center>100%</StatusCell>
      </StatusBar>
    </Window>
  );
}
